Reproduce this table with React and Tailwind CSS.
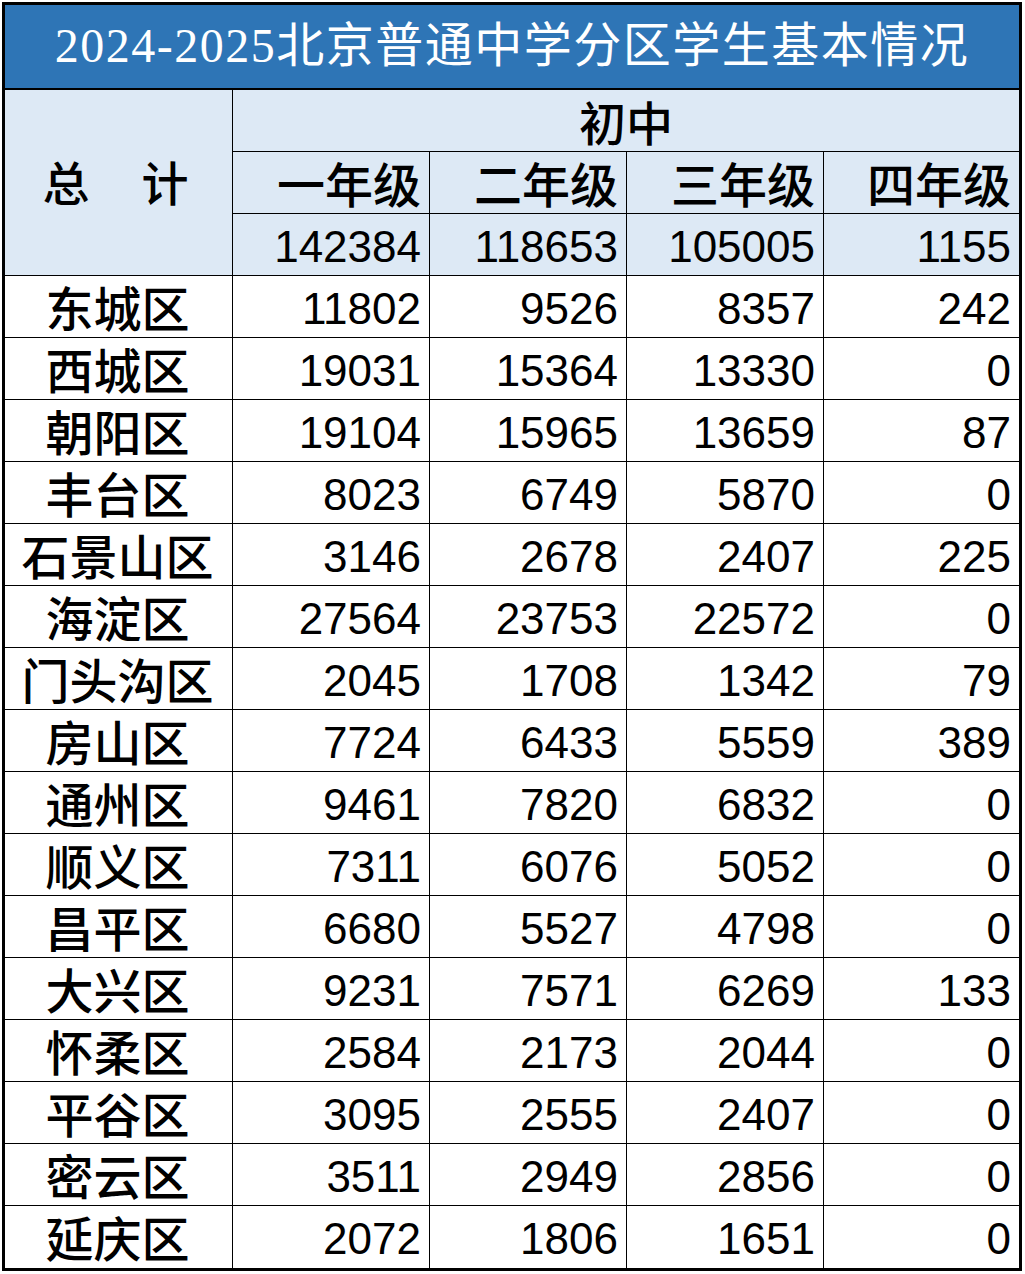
const rows = [
  ["东城区", 11802, 9526, 8357, 242],
  ["西城区", 19031, 15364, 13330, 0],
  ["朝阳区", 19104, 15965, 13659, 87],
  ["丰台区", 8023, 6749, 5870, 0],
  ["石景山区", 3146, 2678, 2407, 225],
  ["海淀区", 27564, 23753, 22572, 0],
  ["门头沟区", 2045, 1708, 1342, 79],
  ["房山区", 7724, 6433, 5559, 389],
  ["通州区", 9461, 7820, 6832, 0],
  ["顺义区", 7311, 6076, 5052, 0],
  ["昌平区", 6680, 5527, 4798, 0],
  ["大兴区", 9231, 7571, 6269, 133],
  ["怀柔区", 2584, 2173, 2044, 0],
  ["平谷区", 3095, 2555, 2407, 0],
  ["密云区", 3511, 2949, 2856, 0],
  ["延庆区", 2072, 1806, 1651, 0],
]

const grades = ["一年级", "二年级", "三年级", "四年级"]
const totals = [142384, 118653, 105005, 1155]

const cjk = "font-['Noto_Sans_CJK_SC',sans-serif] font-medium leading-none"
const num = "font-['Liberation_Sans',sans-serif] leading-none"
const cols = "grid grid-cols-[228px_197px_197px_197px_1fr]"

const App = () => {
  return (
    <div className="min-h-[1274px] bg-white pt-[2px] pl-[2px]">
      <div className="w-[1020px] border-[3px] border-black text-black">
        <div className="flex h-[85px] items-center justify-center border-b-2 border-black bg-[#2e75b6] pb-[2px] font-['Liberation_Serif','Noto_Sans_CJK_SC',serif] text-[48px] tracking-[1.5px] text-white">
          2024-2025北京普通中学分区学生基本情况
        </div>

        <div className={`${cols} grid-rows-[62px_62px_62px] bg-[#dde9f5]`}>
          <div className={`row-span-3 flex items-center justify-center gap-[52px] border-r border-b border-black pr-[6px] pb-[4px] text-[47px] ${cjk}`}>
            <span>总</span>
            <span>计</span>
          </div>
          <div className={`col-span-4 flex items-center justify-center border-b border-black text-[47px] ${cjk}`}>
            初中
          </div>
          {grades.map((g, i) => (
            <div
              key={g}
              className={`flex items-center justify-end border-b border-black pr-[8px] pb-[2px] text-[48px] ${cjk} ${i < 3 ? "border-r" : ""}`}
            >
              {g}
            </div>
          ))}
          {totals.map((t, i) => (
            <div
              key={i}
              className={`flex items-center justify-end border-b border-black pt-[4px] pr-[8px] text-[44px] ${num} ${i < 3 ? "border-r" : ""}`}
            >
              {t}
            </div>
          ))}
        </div>

        {rows.map((r, ri) => (
          <div key={r[0]} className={`${cols} h-[62px] ${ri < rows.length - 1 ? "border-b border-black" : ""}`}>
            <div className={`flex items-center justify-center border-r border-black pr-[2px] pb-[2px] text-[48px] ${cjk}`}>
              {r[0]}
            </div>
            {r.slice(1).map((v, i) => (
              <div
                key={i}
                className={`flex items-center justify-end border-black pt-[4px] pr-[8px] text-[44px] ${num} ${i < 3 ? "border-r" : ""}`}
              >
                {v}
              </div>
            ))}
          </div>
        ))}
      </div>
    </div>
  )
}

export default App
